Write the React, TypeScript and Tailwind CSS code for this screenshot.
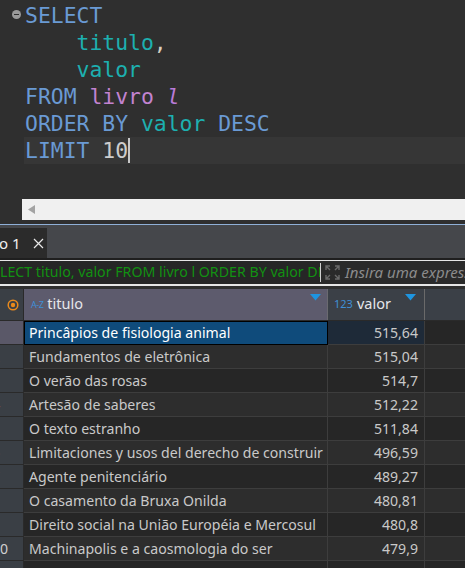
import React from "react";

const KW = "text-[#6a9ad4]";
const ID = "text-[#1db0b0]";

const rows: [string, string][] = [
  ["Princâpios de fisiologia animal", "515,64"],
  ["Fundamentos de eletrônica", "515,04"],
  ["O verão das rosas", "514,7"],
  ["Artesão de saberes", "512,22"],
  ["O texto estranho", "511,84"],
  ["Limitaciones y usos del derecho de construir", "496,59"],
  ["Agente penitenciário", "489,27"],
  ["O casamento da Bruxa Onilda", "480,81"],
  ["Direito social na União Européia e Mercosul", "480,8"],
  ["Machinapolis e a caosmologia do ser", "479,9"],
  ["", ""],
];

function Caret() {
  return (
    <svg width="11" height="7" viewBox="0 0 11 7">
      <path d="M0 0 H11 L5.5 6.5 Z" fill="#1e95e0" />
    </svg>
  );
}

function Editor() {
  return (
    <div className="relative h-[199px] pt-[2px] font-['DejaVu_Sans_Mono',monospace] text-[21.4px] leading-[27px] whitespace-pre">
      <div className="absolute left-[12px] top-[10px] w-[9px] h-[9px] rounded-full bg-[#9a9a9a] flex items-center justify-center">
        <div className="w-[5px] h-[1.5px] bg-[#2f2f2f]" />
      </div>
      <div className="pl-[25px]"><span className={KW}>SELECT</span></div>
      <div className="pl-[25px]"><span className={ID}>    titulo</span><span className="text-[#d8cfc0]">,</span></div>
      <div className="pl-[25px]"><span className={ID}>    valor</span></div>
      <div className="pl-[25px]">
        <span className={KW}>FROM </span>
        <span className="text-[#c283d0]">livro </span>
        <span className="text-[#b97bd8] italic">l</span>
      </div>
      <div className="pl-[25px]">
        <span className={KW}>ORDER BY </span>
        <span className={ID}>valor </span>
        <span className={KW}>DESC</span>
      </div>
      <div className="ml-[24px] pl-[1px] bg-[#363636] flex items-center">
        <span className={KW}>LIMIT </span>
        <span className="text-[#cdcdcd]">10</span>
        <span className="w-[2px] h-[25px] bg-[#c8c8c8]" />
      </div>
    </div>
  );
}

function Tabs() {
  return (
    <div className="h-[34px] bg-[#45474b] border-t border-[#8fb0d8] flex items-end">
      <div className="h-[30px] w-[47px] bg-[#2b2b2b] flex items-center gap-[12px] font-['Noto_Sans',sans-serif] text-[15px] text-[#f0f0f0]">
        <span className="-ml-[1px]">o 1</span>
        <svg width="11" height="11" viewBox="0 0 11 11">
          <path d="M1 1 L10 10 M10 1 L1 10" stroke="#e8e8e8" strokeWidth="1.2" />
        </svg>
      </div>
    </div>
  );
}

function FilterBar() {
  return (
    <div className="border-t-2 border-[#1f1f1f]">
      <div className="h-[26px] border-t border-b-2 border-[#e6e6e6] flex font-['Noto_Sans',sans-serif] text-[14.2px]">
        <div className="w-[320px] shrink-0 bg-[#262626] text-[#129112] leading-[22px] overflow-hidden whitespace-nowrap">
          LECT titulo, valor FROM livro l ORDER BY valor DESC LIMIT 10
        </div>
        <div className="w-[1px] shrink-0 my-[2px] bg-[#cfcfcf]" />
        <div className="flex-1 min-w-0 bg-[#2a2a2a] flex items-center gap-[5px] pl-[4px] overflow-hidden whitespace-nowrap">
          <svg className="shrink-0" width="15" height="15" viewBox="0 0 15 15" fill="none" stroke="#6a6a6a" strokeWidth="1.4">
            <path d="M1 5 V1 H5 M1 1 L5 5" />
            <path d="M10 1 H14 V5 M14 1 L10 5" />
            <path d="M1 10 V14 H5 M1 14 L5 10" />
            <path d="M14 10 V14 H10 M14 14 L10 10" />
          </svg>
          <span className="italic text-[#8c8c8c] text-[15px]">Insira uma expressão</span>
        </div>
      </div>
    </div>
  );
}

function Grid() {
  const cols = "grid grid-cols-[24px_304px_97px_1fr]";
  return (
    <div className="pt-[3px] font-['Noto_Sans',sans-serif] text-[14.1px]">
      <div className={`${cols} h-[32px] border-b border-[#2a2a2a]`}>
        <div className="bg-[#3a3f45] border-r border-[#2a2a2a] flex items-center justify-end pr-[4px]">
          <svg width="12" height="12" viewBox="0 0 12 12">
            <circle cx="6" cy="6" r="4.8" fill="none" stroke="#ea8a1c" strokeWidth="1.5" />
            <circle cx="6" cy="6" r="2.2" fill="#ea8a1c" />
          </svg>
        </div>
        <div className="bg-[#5d5b6d] border-r border-[#6a6a70] flex items-center pl-[7px] pr-[6px] text-[#e6e6ea]">
          <span className="text-[9px] text-[#3f8fd6] mr-[4px] tracking-[-0.5px]">A-Z</span>
          <span className="flex-1 -mt-[1px] text-[14.5px]">titulo</span>
          <span className="-mt-[14px]"><Caret /></span>
        </div>
        <div className="bg-[#3b4047] border-r border-[#6a6a6a] flex items-center pl-[6px] pr-[8px] text-[#e6e6ea]">
          <span className="text-[11px] text-[#3f8fd6] mr-[4px]">123</span>
          <span className="flex-1 -mt-[1px] text-[14.5px]">valor</span>
          <span className="-mt-[14px]"><Caret /></span>
        </div>
        <div className="bg-[#3b4047]" />
      </div>
      {rows.map(([t, v], i) => {
        const sel = i === 0;
        const bg = i % 2 === 1 ? "bg-[#2d2d2d]" : "bg-[#262626]";
        return (
          <div key={i} className={`${cols} h-[24px] text-[#c9c9c9]`}>
            <div className={`${sel ? "bg-[#5a5868]" : "bg-[#3a3f45]"} border-r border-b border-[#2a2a2a] overflow-hidden whitespace-nowrap leading-[23px]`}>
              {i < 10 && <span className="-ml-[8px] inline-block text-[#d0d0d0]">{i + 1}</span>}
            </div>
            {sel ? (
              <div className="bg-[#0f4b7b] border border-black pl-[4px] leading-[21px] text-white whitespace-nowrap overflow-hidden">{t}</div>
            ) : (
              <div className={`${bg} border-r border-b border-[#3d3d3d] pl-[5px] leading-[23px] whitespace-nowrap overflow-hidden`}>{t}</div>
            )}
            <div className={`${sel ? "bg-[#1e2a38]" : bg} border-r border-b border-[#3d3d3d] pr-[6px] text-right leading-[23px]`}>{v}</div>
            <div className={`${bg} border-b border-[#3d3d3d]`} />
          </div>
        );
      })}
    </div>
  );
}

export default function App() {
  return (
    <div className="w-[465px] h-[568px] overflow-hidden bg-[#2f2f2f]">
      <Editor />
      <div className="h-[21px] ml-[22px] bg-[#f0f0f0] flex items-center pl-[6px]">
        <svg width="8" height="9" viewBox="0 0 8 9">
          <path d="M7 0 V9 L0 4.5 Z" fill="#a3a3a3" />
        </svg>
      </div>
      <div className="h-[4px]" />
      <Tabs />
      <FilterBar />
      <Grid />
    </div>
  );
}
